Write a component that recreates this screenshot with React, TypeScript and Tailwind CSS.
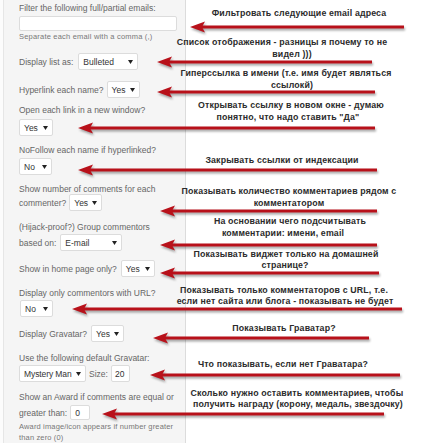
import React from "react";

type SelProps = { className: string; children: React.ReactNode };

function Caret() {
  return (
    <svg width="5" height="4" viewBox="0 0 5 4" className="shrink-0">
      <polygon points="0,0 5,0 2.5,4" fill="#222" />
    </svg>
  );
}

function Sel({ className, children }: SelProps) {
  return (
    <div
      className={
        "flex h-[17px] shrink-0 items-center justify-between rounded-[2px] border border-[#dcdcdc] bg-white pl-[4px] pr-[4px] text-[#333] " +
        className
      }
    >
      <span>{children}</span>
      <Caret />
    </div>
  );
}

const arrows: [number, number, number][] = [
  [190, 27, 404],
  [157, 62, 372],
  [157, 92, 375],
  [78, 128, 375],
  [78, 170, 377],
  [160, 211, 377],
  [160, 245, 377],
  [160, 273, 379],
  [72, 309, 402],
  [153, 338, 369],
  [150, 375, 400],
  [102, 414, 384],
];

const notes: [string, number, number][] = [
  ["Фильтровать следующие email адреса", 299, 14],
  ["Список отображения - разницы я почему то не", 282, 43],
  ["видел )))", 292, 55],
  ["Гиперссылка в имени (т.е. имя будет являться", 286, 74],
  ["ссылокй)", 292, 86],
  ["Открывать ссылку в новом окне - думаю", 291, 106],
  ["понятно, что надо ставить \"Да\"", 288, 118],
  ["Закрывать ссылки от индексации", 282, 161],
  ["Показывать количество комментариев рядом с", 289, 192],
  ["комментатором", 289, 204],
  ["На основании чего подсчитывать", 290, 222],
  ["комментарии: имени, email", 283, 234],
  ["Показывать виджет только на домашней", 286, 255],
  ["странице?", 285, 266],
  ["Показывать только комментаторов с URL, т.е.", 284, 291],
  ["если нет сайта или блога - показывать не будет", 285, 302],
  ["Показывать Граватар?", 284, 329],
  ["Что показывать, если нет Граватара?", 283, 365],
  ["Сколько нужно оставить комментариев, чтобы", 297, 394],
  ["получить награду (корону, медаль, звездочку)", 298, 405],
];

export default function App() {
  return (
    <div className="relative h-[443px] w-[424px] overflow-hidden bg-[#fcfcfc] font-['Liberation_Sans',Arial,sans-serif]">
      <div className="flex h-full">
        <div className="ml-[3px] flex h-full w-[183px] flex-col border-x border-l-[#e6e6e6] border-r-[#dcdcdc] bg-[#f5f5f5] pl-[15px] pt-[2px] text-[8.5px] leading-[12px] text-[#666]">
          <div>Filter the following full/partial emails:</div>
          <div className="mt-[2px] h-[15px] w-[158px] rounded-[2px] border border-[#dcdcdc] bg-white" />
          <div className="mt-[1px] text-[7.5px] leading-[10px] tracking-[0.2px] text-[#777]">
            Separate each email with a comma (,)
          </div>
          <div className="mt-[11px] flex items-center gap-[5px]">
            <span>Display list as:</span>
            <Sel className="w-[60px]">Bulleted</Sel>
          </div>
          <div className="mt-[11px] flex items-center gap-[3px]">
            <span>Hyperlink each name?</span>
            <Sel className="w-[33px]">Yes</Sel>
          </div>
          <div className="mt-[6px]">Open each link in a new window?</div>
          <Sel className="mt-[3px] w-[34px]">Yes</Sel>
          <div className="mt-[8px]">NoFollow each name if hyperlinked?</div>
          <Sel className="mt-[2px] w-[33px]">No</Sel>
          <div className="mt-[8px]">Show number of comments for each</div>
          <div className="mt-[-1px] flex items-center gap-[3px]">
            <span>commenter?</span>
            <Sel className="w-[33px]">Yes</Sel>
          </div>
          <div className="mt-[10px]">(Hijack-proof?) Group commentors</div>
          <div className="mt-[1px] flex items-center gap-[4px]">
            <span>based on:</span>
            <Sel className="w-[62px]">E-mail</Sel>
          </div>
          <div className="mt-[9px] flex items-center gap-[4px]">
            <span>Show in home page only?</span>
            <Sel className="w-[34px]">Yes</Sel>
          </div>
          <div className="mt-[10px]">Display only commentors with URL?</div>
          <Sel className="ml-[1px] mt-[1px] w-[33px]">No</Sel>
          <div className="mt-[8px] flex items-center gap-[4px]">
            <span>Display Gravatar?</span>
            <Sel className="w-[33px]">Yes</Sel>
          </div>
          <div className="mt-[10px]">Use the following default Gravatar:</div>
          <div className="mt-[1px] flex items-center">
            <Sel className="w-[67px] tracking-[-0.1px]">Mystery Man</Sel>
            <span className="ml-[3px]">Size:</span>
            <div className="ml-[3px] flex h-[17px] w-[19px] items-center rounded-[2px] border border-[#dcdcdc] bg-white pl-[3px] text-[#333]">
              20
            </div>
          </div>
          <div className="mt-[9px]">Show an Award if comments are equal or</div>
          <div className="mt-[2px] flex items-center gap-[3px]">
            <span>greater than:</span>
            <div className="flex h-[15px] w-[20px] items-center rounded-[2px] border border-[#dcdcdc] bg-white pl-[4px] text-[#333]">
              0
            </div>
          </div>
          <div className="mt-[1px] text-[7.5px] leading-[11px] tracking-[0.15px] text-[#777]">
            Award image/icon appears if number greater
            <br />
            than zero (0)
          </div>
        </div>
        <div className="flex-1 bg-white" />
      </div>

      {notes.map(([t, cx, cy], i) => (
        <div
          key={i}
          className="absolute w-[300px] whitespace-nowrap text-center text-[8.8px] font-bold leading-[11px] tracking-[0.15px] text-[#2b2b2b]"
          style={{ left: cx - 150, top: cy - 6 }}
        >
          {t}
        </div>
      ))}

      <svg
        className="pointer-events-none absolute left-0 top-0 drop-shadow-[1px_2px_1px_rgba(0,0,0,0.35)]"
        width="424"
        height="443"
        viewBox="0 0 424 443"
      >
        {arrows.map(([x, y, end], i) => (
          <g key={i}>
            <line x1={x + 10} y1={y} x2={end} y2={y} stroke="#b8111a" strokeWidth="3" />
            <polygon
              points={`${x},${y} ${x + 15},${y - 5.5} ${x + 12},${y} ${x + 15},${y + 5.5}`}
              fill="#b8111a"
            />
          </g>
        ))}
      </svg>
    </div>
  );
}
